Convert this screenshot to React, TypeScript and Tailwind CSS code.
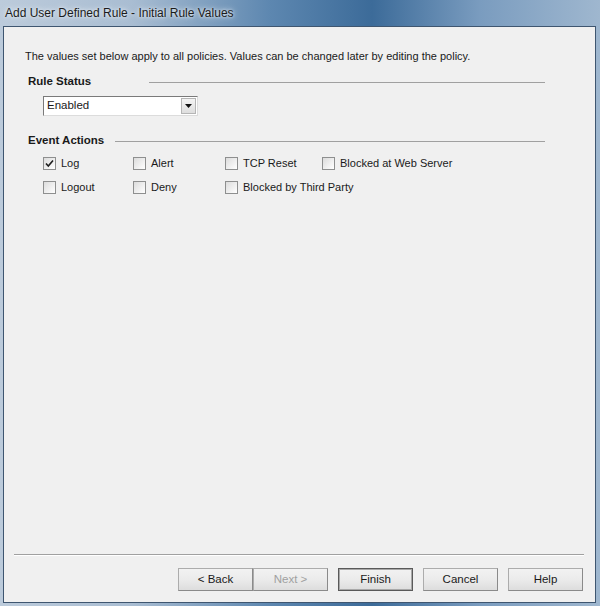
import React from "react";

const font = { fontFamily: '"Liberation Sans", Arial, sans-serif' };

function Check({ checked, label }: { checked?: boolean; label: string }) {
  return (
    <div className="flex items-center h-[13px] whitespace-nowrap">
      <div className="w-[13px] h-[13px] shrink-0 border border-[#8e8f8f] bg-gradient-to-br from-[#dcdcdc] to-white flex items-center justify-center">
        {checked && (
          <svg width="9" height="9" viewBox="0 0 9 9">
            <path d="M1 4.5 L3.3 7 L8 1.5" fill="none" stroke="#1e1e1e" strokeWidth="1.6" />
          </svg>
        )}
      </div>
      <span className="ml-[5px] text-[11px] text-[#1a1a1a] leading-none">{label}</span>
    </div>
  );
}

function Button({ label, disabled, isDefault }: { label: string; disabled?: boolean; isDefault?: boolean }) {
  return (
    <div
      className={`w-[75px] h-[23px] flex items-center justify-center text-[11.5px] border bg-gradient-to-b from-[#f2f2f2] via-[#ebebeb] to-[#dddddd] ${
        isDefault ? "border-[#5a5a5a] shadow-[inset_0_0_0_1px_#a8a8a8]" : "border-[#acacac] border-r-[#8a8a8a] border-b-[#8a8a8a]"
      } ${disabled ? "text-[#a0a0a0]" : "text-[#1a1a1a]"}`}
    >
      {label}
    </div>
  );
}

function Header({ label, lineStart }: { label: string; lineStart: string }) {
  return (
    <div className="flex items-center h-[14px] pr-[50px]">
      <span className="ml-[24px] text-[11.5px] font-bold text-[#1a1a1a]">{label}</span>
      <div className={`${lineStart} flex-1 h-px bg-[#a0a0a0]`} />
    </div>
  );
}

export default function App() {
  return (
    <div
      className="w-[600px] h-[606px] flex flex-col bg-[linear-gradient(90deg,#bccbdb_0%,#a9bdd2_22%,#5d87b0_45%,#3c6b99_62%,#7a9cbf_80%,#9fb7cf_100%)]"
      style={font}
    >
      <div className="h-[26px] flex items-center pl-[5px] text-[12px] text-[#1b1b1b] [text-shadow:0_0_6px_#e8eef5,0_0_3px_#e8eef5]">
        Add User Defined Rule - Initial Rule Values
      </div>
      <div className="flex-1 flex ml-[3px] mr-[4px] mb-[3px]">
        <div className="flex-1 flex flex-col bg-[#f0f0f0] border border-[#3f5670]">
          <div className="mt-[22px] ml-[21px] text-[11px] text-[#1a1a1a] leading-[14px]">
            The values set below apply to all policies. Values can be changed later by editing the policy.
          </div>
          <div className="mt-[12px]">
            <Header label="Rule Status" lineStart="ml-[58px]" />
          </div>
          <div className="mt-[7px] ml-[39px] w-[155px] h-[20px] bg-white border border-[#7a7a7a] border-r-[#dcdcdc] border-b-[#dcdcdc] flex items-center">
            <span className="flex-1 pl-[3px] text-[11.5px] text-[#1a1a1a]">Enabled</span>
            <div className="w-[15px] h-[16px] mr-[1px] bg-gradient-to-b from-[#f4f4f4] to-[#dedede] border border-[#b5b5b5] flex items-center justify-center">
              <svg width="7" height="4" viewBox="0 0 7 4">
                <path d="M0 0 H7 L3.5 4 Z" fill="#111" />
              </svg>
            </div>
          </div>
          <div className="mt-[18px]">
            <Header label="Event Actions" lineStart="ml-[11px]" />
          </div>
          <div className="mt-[9px] ml-[39px] grid grid-cols-[90px_92px_97px_auto] gap-y-[11px]">
            <Check checked label="Log" />
            <Check label="Alert" />
            <Check label="TCP Reset" />
            <Check label="Blocked at Web Server" />
            <Check label="Logout" />
            <Check label="Deny" />
            <Check label="Blocked by Third Party" />
          </div>
          <div className="flex-1" />
          <div className="ml-[10px] mr-[11px] h-px bg-[#a0a0a0] border-b border-white box-content" />
          <div className="mt-[12px] mb-[11px] flex justify-end mr-[12px]">
            <Button label="< Back" />
            <Button label="Next >" disabled />
            <div className="ml-[10px]">
              <Button label="Finish" isDefault />
            </div>
            <div className="ml-[10px]">
              <Button label="Cancel" />
            </div>
            <div className="ml-[10px]">
              <Button label="Help" />
            </div>
          </div>
        </div>
      </div>
    </div>
  );
}
